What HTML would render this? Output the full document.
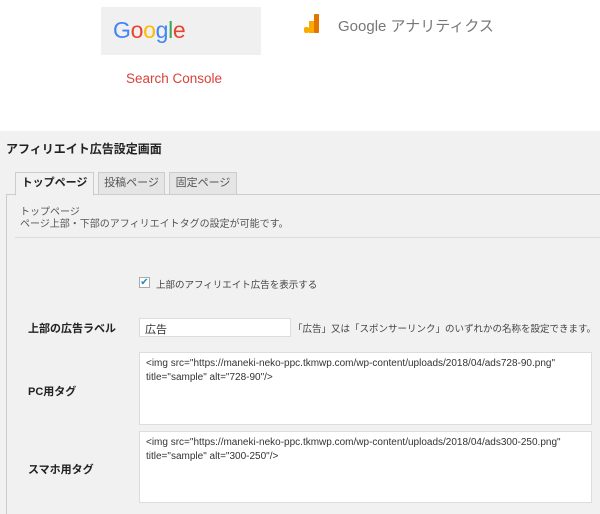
<!DOCTYPE html>
<html><head><meta charset="utf-8"><style>
*{margin:0;padding:0;box-sizing:border-box}
body{width:600px;height:514px;overflow:hidden;background:#fff;font-family:"Liberation Sans","Noto Sans CJK JP",sans-serif;position:relative}
.a{position:absolute;white-space:nowrap}
.gray{position:absolute;left:0;top:131px;width:600px;height:383px;background:#f1f1f1}
.tab{position:absolute;top:172px;height:23px;border:1px solid #ccc;background:#e5e5e5;font-size:11px;color:#555;text-align:center;line-height:21px}
.ta{position:absolute;left:139px;width:453px;background:#fff;border:1px solid #ddd;font-size:10px;color:#333;padding:4px 6px;line-height:14px;white-space:nowrap}
.lbl{font-size:11px;font-weight:bold;color:#222}
</style></head><body>
<div class="a" style="left:101px;top:7px;width:160px;height:48px;background:#f0f0f0"></div>
<div class="a" style="left:113px;top:17px;font-size:23px;letter-spacing:-0.3px"><span style="color:#4285f4">G</span><span style="color:#ea4335">o</span><span style="color:#fbbc05">o</span><span style="color:#4285f4">g</span><span style="color:#34a853">l</span><span style="color:#ea4335">e</span></div>
<div class="a" style="left:126px;top:71px;font-size:13.5px;color:#d9423a">Search Console</div>
<svg class="a" style="left:304px;top:14px" width="16" height="20"><rect x="0" y="13" width="5" height="6" rx="2" fill="#f9ab00"/><rect x="5" y="7" width="5" height="12" fill="#f9ab00"/><rect x="10" y="0" width="5" height="19" rx="1" fill="#e37400"/></svg>
<div class="a" style="left:338px;top:15px;font-size:15px;color:#777">Google アナリティクス</div>
<div class="gray"></div>
<div class="a" style="left:6px;top:140px;font-size:12px;font-weight:bold;color:#222">アフィリエイト広告設定画面</div>
<div class="a" style="left:6px;top:194px;width:594px;height:320px;border-left:1px solid #ccc;border-top:1px solid #ccc"></div>
<div class="tab" style="left:15px;width:79px;background:#f1f1f1;border-bottom-color:#f1f1f1;color:#222;font-weight:bold;height:24px">トップページ</div>
<div class="tab" style="left:98px;width:67px">投稿ページ</div>
<div class="tab" style="left:169px;width:68px">固定ページ</div>
<div class="a" style="left:20px;top:207px;font-size:10px;color:#555;line-height:12px">トップページ<br>ページ上部・下部のアフィリエイトタグの設定が可能です。</div>
<div class="a" style="left:15px;top:237px;width:585px;height:1px;background:#ddd"></div>
<div class="a" style="left:139px;top:277px;width:11px;height:11px;border:1px solid #aaa;background:#fff;font-size:10px;color:#1e8cbe;line-height:9px;text-align:center">✔</div>
<div class="a" style="left:156px;top:277px;font-size:9.5px;color:#444">上部のアフィリエイト広告を表示する</div>
<div class="a lbl" style="left:28px;top:320px">上部の広告ラベル</div>
<div class="a" style="left:139px;top:318px;width:152px;height:19px;background:#fff;border:1px solid #ddd;font-size:11px;color:#333;padding:2px 5px">広告</div>
<div class="a" style="left:293px;top:321px;font-size:9.5px;color:#444">「広告」又は「スポンサーリンク」のいずれかの名称を設定できます。</div>
<div class="ta" style="top:352px;height:73px">&lt;img src="https://maneki-neko-ppc.tkmwp.com/wp-content/uploads/2018/04/ads728-90.png"<br>title="sample" alt="728-90"/&gt;</div>
<div class="a lbl" style="left:28px;top:383px">PC用タグ</div>
<div class="ta" style="top:431px;height:72px">&lt;img src="https://maneki-neko-ppc.tkmwp.com/wp-content/uploads/2018/04/ads300-250.png"<br>title="sample" alt="300-250"/&gt;</div>
<div class="a lbl" style="left:28px;top:461px">スマホ用タグ</div>
</body></html>
